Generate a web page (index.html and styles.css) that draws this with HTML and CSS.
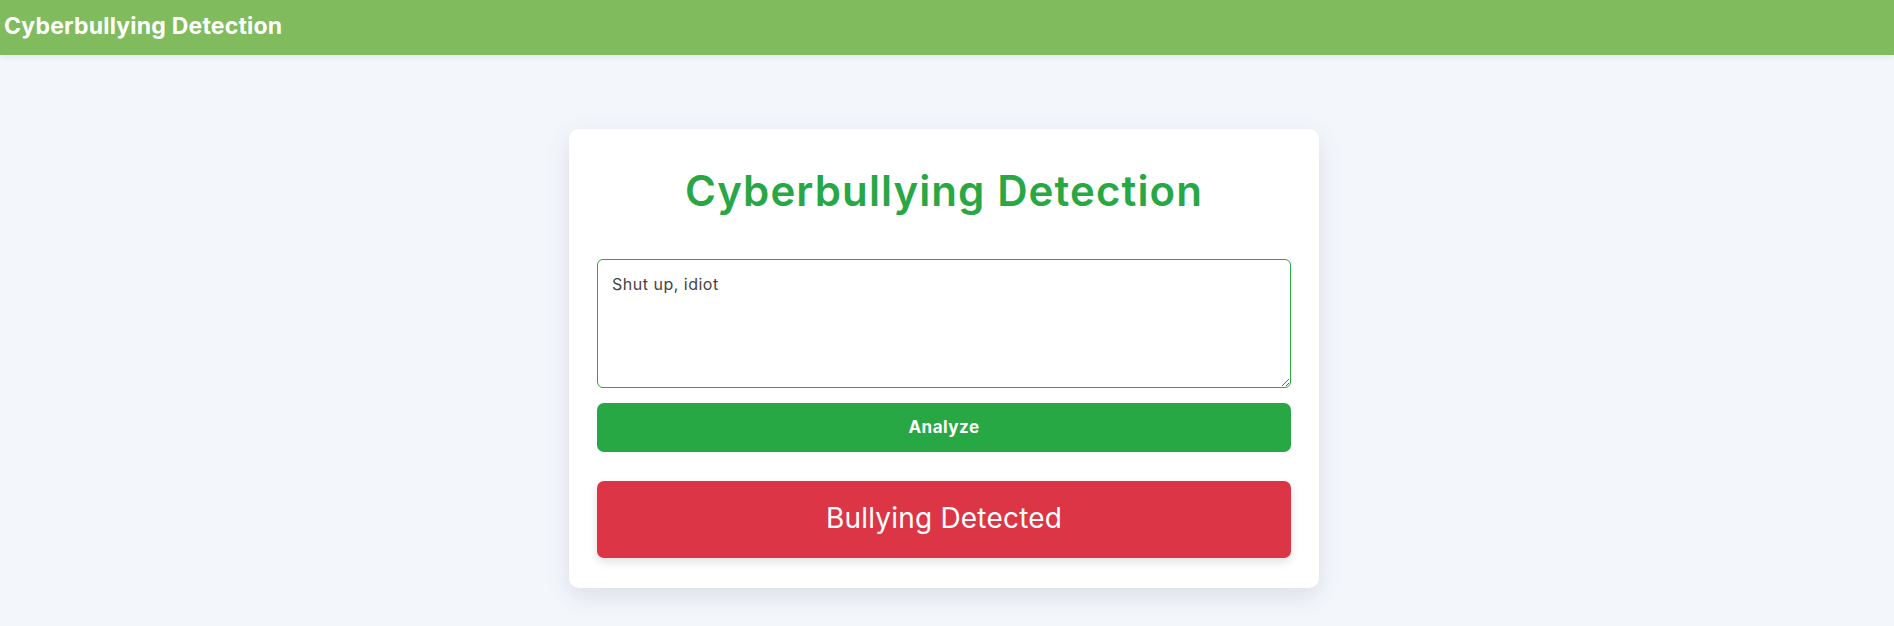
FILE: index.html
```html
<!DOCTYPE html>
<html lang="en">
<head>
<meta charset="utf-8">
<title>Cyberbullying Detection</title>
<link rel="stylesheet" href="styles.css">
</head>
<body>
<header class="topbar">
  <h1 class="brand">Cyberbullying Detection</h1>
</header>
<main class="page">
  <section class="card">
    <h2 class="title">Cyberbullying Detection</h2>
    <form class="form">
      <textarea class="input">Shut up, idiot</textarea>
      <button type="button" class="btn">Analyze</button>
    </form>
    <div class="result">Bullying Detected</div>
  </section>
</main>
</body>
</html>
```

FILE: styles.css
```css
* { box-sizing: border-box; }
html, body { margin: 0; padding: 0; }
body {
  background: #f3f6fb;
  font-family: "Inter", "Liberation Sans", sans-serif;
  color: #333;
  height: 626px;
  overflow: hidden;
}
.topbar {
  background: #80bc5e;
  height: 55px;
  display: flex;
  align-items: center;
  padding-left: 4px;
  box-shadow: 0 2px 6px rgba(0,0,0,0.08);
}
.brand {
  margin: 0 0 4px;
  color: #fff;
  font-size: 23px;
  font-weight: 700;
  letter-spacing: 0.2px;
}
.page {
  display: flex;
  justify-content: center;
  padding-top: 74px;
  padding-right: 6px;
}
.card {
  width: 750px;
  background: #fff;
  border-radius: 10px;
  box-shadow: 0 8px 24px rgba(20, 30, 60, 0.10);
  padding: 28px 28px 30px;
}
.title {
  margin: 4px 0 38px;
  text-align: center;
  color: #28a745;
  font-size: 42px;
  font-weight: 600;
  line-height: 60px;
  letter-spacing: 1.1px;
}
.form {
  display: flex;
  flex-direction: column;
  gap: 15px;
}
.input {
  display: block;
  width: 100%;
  height: 129px;
  border: 1px solid #28a745;
  border-radius: 6px;
  padding: 12px 14px;
  font-family: inherit;
  font-size: 16px;
  letter-spacing: 0.5px;
  line-height: 24px;
  color: #444;
  outline: none;
}
.btn {
  height: 49px;
  border: none;
  border-radius: 7px;
  background: #28a745;
  color: #fff;
  font-family: inherit;
  font-size: 17px;
  font-weight: 700;
  letter-spacing: 0.5px;
  padding-bottom: 2px;
}
.result {
  margin-top: 29px;
  height: 77px;
  border-radius: 7px;
  background: #dc3545;
  color: #fff;
  font-size: 28px;
  letter-spacing: 0.2px;
  padding-bottom: 4px;
  display: flex;
  align-items: center;
  justify-content: center;
  box-shadow: 0 4px 10px rgba(0,0,0,0.12);
}
```
